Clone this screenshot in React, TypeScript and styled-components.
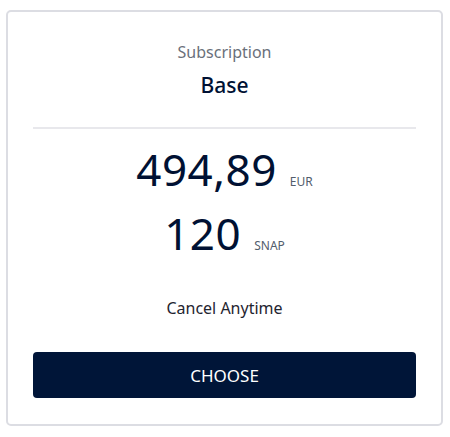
import React from 'react';
import styled, { createGlobalStyle } from 'styled-components';

const GlobalStyle = createGlobalStyle`
  body {
    margin: 0;
    background: #fff;
    font-family: 'Noto Sans', 'Open Sans', sans-serif;
  }
`

const Page = styled.div`
  padding: 10px 7px 0 6px;
`

const Card = styled.div`
  box-sizing: border-box;
  width: 437px;
  height: 416px;
  padding: 29px 25px 0;
  border: 2px solid #dcdde3;
  border-radius: 5px;
  background: #fff;
  display: flex;
  flex-direction: column;
  align-items: stretch;
`

const Header = styled.div`
  display: flex;
  flex-direction: column;
  align-items: center;
  padding-bottom: 29px;
  border-bottom: 2px solid #e8e8ec;
`

const Label = styled.span`
  font-size: 16px;
  line-height: 22px;
  color: #6a707a;
`

const Plan = styled.span`
  margin-top: 9px;
  font-size: 21px;
  line-height: 26px;
  font-weight: 500;
  color: #001133;
`

const Prices = styled.div`
  display: flex;
  flex-direction: column;
  align-items: center;
  gap: 7px;
  margin-top: 12px;
`

const PriceRow = styled.div`
  display: flex;
  align-items: baseline;
  gap: 13px;
`

const Amount = styled.span`
  font-size: 44px;
  line-height: 57px;
  font-weight: 400;
  color: #001133;
  letter-spacing: 0.5px;
`

const Unit = styled.span`
  font-size: 12px;
  color: #525d6c;
`

const Note = styled.div`
  margin-top: 35px;
  text-align: center;
  font-size: 16px;
  line-height: 22px;
  color: #1f2530;
`

const Button = styled.button`
  margin-top: 33px;
  height: 46px;
  border: none;
  border-radius: 4px;
  background: #001538;
  color: #fff;
  font-family: inherit;
  font-size: 17px;
  cursor: pointer;
`

const App: React.FC = () => {
  return (
    <Page>
      <GlobalStyle />
      <Card>
        <Header>
          <Label>Subscription</Label>
          <Plan>Base</Plan>
        </Header>
        <Prices>
          <PriceRow>
            <Amount>494,89</Amount>
            <Unit>EUR</Unit>
          </PriceRow>
          <PriceRow>
            <Amount>120</Amount>
            <Unit>SNAP</Unit>
          </PriceRow>
        </Prices>
        <Note>Cancel Anytime</Note>
        <Button>CHOOSE</Button>
      </Card>
    </Page>
  )
}

export default App;
